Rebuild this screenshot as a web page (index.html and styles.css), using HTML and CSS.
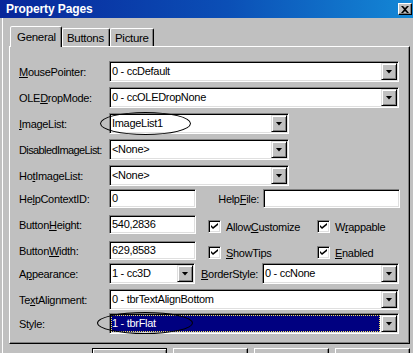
FILE: index.html
```html
<!DOCTYPE html>
<html lang="en">
<head>
    <meta charset="UTF-8">
    <meta name="viewport" content="width=device-width, initial-scale=1.0">
    <title>Property Pages</title>
    <link rel="stylesheet" href="styles.css">
</head>
<body>
    <div class="titlebar">
        <span class="title">Property Pages</span>
        <span class="close">
            <svg width="8" height="7" viewBox="0 0 8 7"><path d="M0 0h2l2 2 2-2h2L5 3.5 8 7H6L4 5 2 7H0l3-3.5z" fill="#000"/></svg>
        </span>
    </div>

    <div class="dialog">
        <div class="tabs">
            <div class="tab active tab-general">General</div>
            <div class="tab tab-buttons">Buttons</div>
            <div class="tab tab-picture">Picture</div>
        </div>

        <div class="panel">
            <div class="row">
                <span class="lbl"><u>M</u>ousePointer:</span>
                <div class="field combo-wide"><span class="value">0 - ccDefault</span><span class="drop"></span></div>
            </div>
            <div class="row row-sp">
                <span class="lbl">OLE<u>D</u>ropMode:</span>
                <div class="field combo-wide"><span class="value">0 - ccOLEDropNone</span><span class="drop"></span></div>
            </div>
            <div class="row row-sp">
                <span class="lbl"><u>I</u>mageList:</span>
                <div class="field combo-mid"><span class="value">ImageList1</span><span class="drop"></span></div>
            </div>
            <div class="row row-sp">
                <span class="lbl lbl-long">DisabledImageList:</span>
                <div class="field combo-mid"><span class="value">&lt;None&gt;</span><span class="drop"></span></div>
            </div>
            <div class="row row-sp">
                <span class="lbl">Ho<u>t</u>ImageList:</span>
                <div class="field combo-mid"><span class="value">&lt;None&gt;</span><span class="drop"></span></div>
            </div>
            <div class="row row-tight">
                <span class="lbl">He<u>l</u>pContextID:</span>
                <div class="field text text-short"><span class="value">0</span></div>
                <span class="lbl-mid">Help<u>F</u>ile:</span>
                <div class="field text text-right"><span class="value"></span></div>
            </div>
            <div class="row row-loose">
                <span class="lbl">Button<u>H</u>eight:</span>
                <div class="field text text-short"><span class="value">540,2836</span></div>
                <label class="check"><span class="box"><svg width="7" height="7" viewBox="0 0 7 7"><path d="M0 2l2 2 5-4v2L2 6 0 4z" fill="#000"/></svg></span><span>Allow<u>C</u>ustomize</span></label>
                <label class="check"><span class="box"><svg width="7" height="7" viewBox="0 0 7 7"><path d="M0 2l2 2 5-4v2L2 6 0 4z" fill="#000"/></svg></span><span>W<u>r</u>appable</span></label>
            </div>
            <div class="row row-loose">
                <span class="lbl">Button<u>W</u>idth:</span>
                <div class="field text text-short"><span class="value">629,8583</span></div>
                <label class="check"><span class="box"><svg width="7" height="7" viewBox="0 0 7 7"><path d="M0 2l2 2 5-4v2L2 6 0 4z" fill="#000"/></svg></span><span><u>S</u>howTips</span></label>
                <label class="check"><span class="box"><svg width="7" height="7" viewBox="0 0 7 7"><path d="M0 2l2 2 5-4v2L2 6 0 4z" fill="#000"/></svg></span><span><u>E</u>nabled</span></label>
            </div>
            <div class="row row-tight">
                <span class="lbl">A<u>p</u>pearance:</span>
                <div class="field combo-short"><span class="value">1 - cc3D</span><span class="drop"></span></div>
                <span class="lbl-mid"><u>B</u>orderStyle:</span>
                <div class="field combo-right"><span class="value">0 - ccNone</span><span class="drop"></span></div>
            </div>
            <div class="row row-sp">
                <span class="lbl">Te<u>x</u>tAlignment:</span>
                <div class="field combo-wide"><span class="value">0 - tbrTextAlignBottom</span><span class="drop"></span></div>
            </div>
            <div class="row row-tight">
                <span class="lbl">Style:</span>
                <div class="field combo-wide"><span class="value selected">1 - tbrFlat</span><span class="drop"></span></div>
            </div>
        </div>

        <div class="buttons">
            <span class="btn default"></span>
            <span class="btn"></span>
            <span class="btn"></span>
            <span class="btn"></span>
        </div>
    </div>

    <div class="mark mark-imagelist"></div>
    <div class="mark mark-style"></div>
</body>
</html>
```

FILE: styles.css
```css
* {
    box-sizing: border-box;
}

body {
    margin: 0;
    width: 413px;
    height: 353px;
    overflow: hidden;
    position: relative;
    background-color: #c0c0c0;
    font-family: "Liberation Sans", Arial, sans-serif;
    font-size: 11px;
    letter-spacing: -0.3px;
    color: #000;
}

u {
    text-decoration: underline;
    text-underline-offset: 1px;
}

.titlebar {
    height: 18px;
    display: flex;
    align-items: center;
    justify-content: space-between;
    padding: 0 1px 0 6px;
    background: linear-gradient(to right, #08269a, #0b4fb6 55%, #1488d6);
}

.title {
    color: white;
    font-weight: bold;
    font-size: 12px;
    letter-spacing: -0.1px;
}

.close {
    width: 14px;
    height: 12px;
    display: flex;
    align-items: center;
    justify-content: center;
    background-color: #c0c0c0;
    border: 1px solid;
    border-color: #fff #000 #000 #fff;
    box-shadow: inset -1px -1px #808080;
}

.dialog {
    margin-left: 2px;
    border-left: 1px solid #fff;
    height: 335px;
    padding-top: 8px;
}

/* tabs */
.tabs {
    display: flex;
    align-items: flex-end;
    height: 20px;
    margin-left: 7px;
}

.tab {
    height: 18px;
    padding: 3px 0 0 4px;
    border: 1px solid;
    border-bottom: none;
    border-color: #fff #000 transparent #fff;
    border-radius: 2px 2px 0 0;
    box-shadow: inset -1px 0 #808080;
    font-size: 11.5px;
}

.tab.active {
    position: relative;
    z-index: 1;
    height: 21px;
    margin-bottom: -1px;
    padding: 4px 0 0 6px;
    background-color: #c0c0c0;
}

.tab-general { width: 52px; }
.tab-buttons { width: 48px; }
.tab-picture { width: 44px; }

.panel {
    margin-left: 6px;
    width: 401px;
    height: 298px;
    padding: 14px 0 0 9px;
    border: 1px solid;
    border-color: #fff #000 #000 #fff;
    box-shadow: inset -1px -1px #808080;
}

/* rows */
.row {
    display: flex;
    align-items: center;
}

.row-sp { margin-top: 5px; }
.row-tight { margin-top: 3px; }
.row-loose { margin-top: 7px; }

.lbl {
    width: 90px;
    flex: none;
    white-space: nowrap;
}

.lbl-long {
    letter-spacing: -0.6px;
}

.lbl-mid {
    width: 67px;
    flex: none;
    text-align: right;
    padding-right: 4px;
    white-space: nowrap;
}

.field {
    display: flex;
    flex: none;
    height: 21px;
    padding: 1px;
    background-color: #fff;
    border: 1px solid;
    border-color: #808080 #fff #fff #808080;
    box-shadow: inset 1px 1px #000, inset -1px -1px #dfdfdf;
}

.combo-wide { width: 290px; }
.combo-mid { width: 180px; }
.combo-short { width: 86px; }
.combo-right { width: 137px; }

.text { height: 19px; }
.text-short { width: 87px; }
.text-right { width: 137px; }

.value {
    flex: 1;
    padding-left: 1px;
    line-height: 17px;
    white-space: nowrap;
    overflow: hidden;
}

.text .value {
    line-height: 15px;
}

.value.selected {
    margin-right: 1px;
    background-color: #000080;
    color: white;
    outline: 1px dotted #f0e060;
    outline-offset: -1px;
}

.drop {
    width: 16px;
    height: 17px;
    flex: none;
    display: flex;
    align-items: center;
    justify-content: center;
    background-color: #c0c0c0;
    border: 1px solid;
    border-color: #dfdfdf #000 #000 #dfdfdf;
    box-shadow: inset 1px 1px #fff, inset -1px -1px #808080;
}

.drop::after {
    content: "";
    width: 7px;
    height: 4px;
    background-color: #000;
    clip-path: polygon(0 0, 100% 0, 50% 100%);
}

/* checkboxes */
.check {
    width: 109px;
    flex: none;
    display: flex;
    align-items: center;
    gap: 5px;
    padding-top: 4px;
    white-space: nowrap;
}

.check:first-of-type {
    margin-left: 12px;
}

.box {
    width: 13px;
    height: 13px;
    display: flex;
    align-items: center;
    justify-content: center;
    background-color: #fff;
    border: 1px solid;
    border-color: #808080 #fff #fff #808080;
    box-shadow: inset 1px 1px #000, inset -1px -1px #dfdfdf;
}

/* bottom buttons, cut off by the window edge */
.buttons {
    display: flex;
    gap: 6px;
    margin: 4px 0 0 89px;
}

.btn {
    width: 75px;
    height: 6px;
    border: 1px solid;
    border-bottom: none;
    border-color: #fff #000 transparent #fff;
    box-shadow: inset -1px 0 #808080;
}

.btn.default {
    border-color: #000;
    box-shadow: inset 1px 1px #fff, inset -1px 0 #808080;
}

/* hand-drawn annotation ellipses */
.mark {
    position: absolute;
    border: 1px solid #000;
    border-radius: 50%;
}

.mark-imagelist {
    left: 100px;
    top: 112px;
    width: 91px;
    height: 23px;
}

.mark-style {
    left: 97px;
    top: 312px;
    width: 96px;
    height: 22px;
}
```
